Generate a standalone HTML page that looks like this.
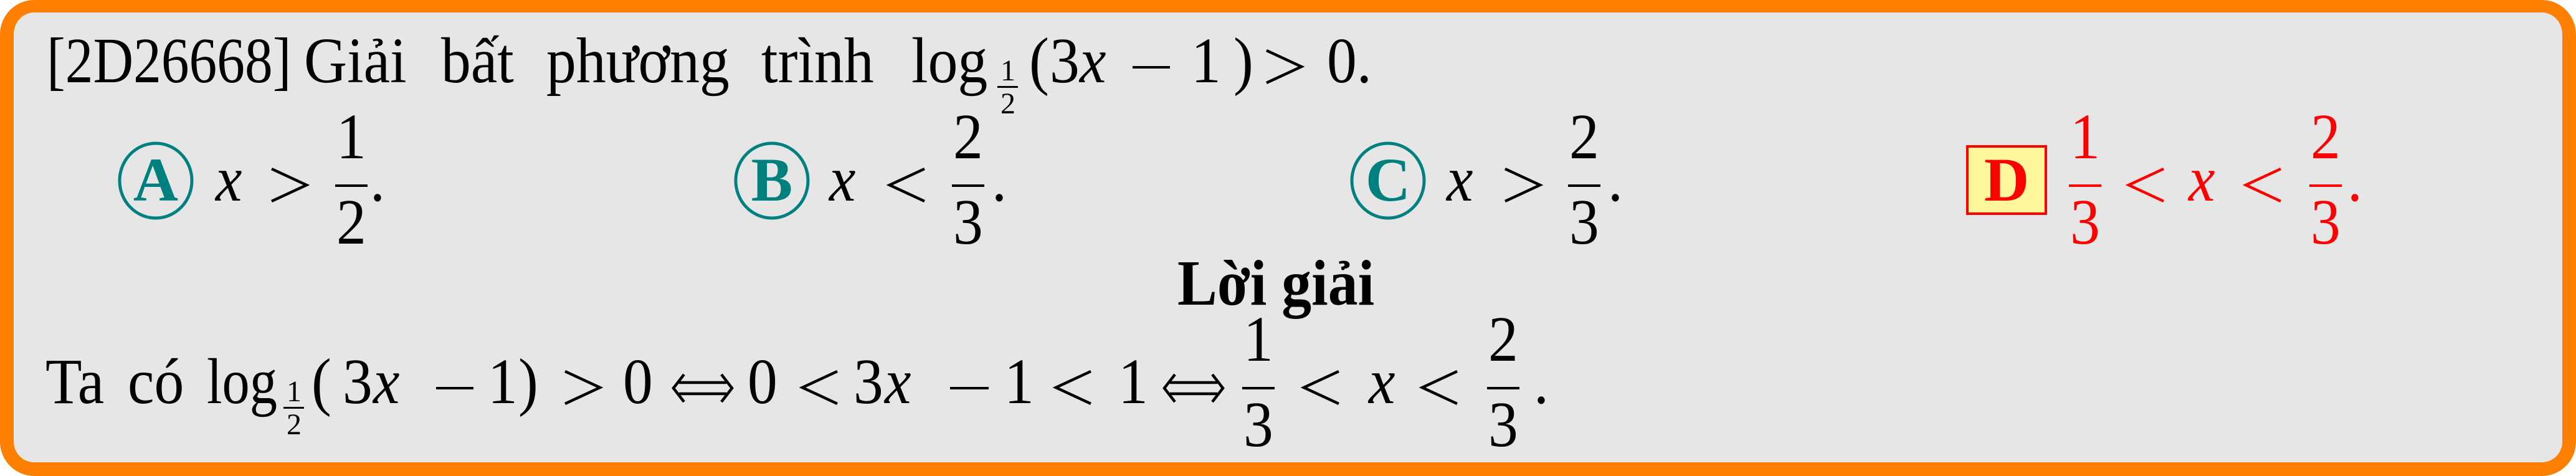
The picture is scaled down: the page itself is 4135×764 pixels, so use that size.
<!DOCTYPE html>
<html><head><meta charset="utf-8">
<style>
html,body{margin:0;padding:0;background:#fff;}
body{width:4135px;height:764px;position:relative;overflow:hidden;}
#box{position:absolute;left:0;top:0;width:4135px;height:764px;box-sizing:border-box;background:#e6e6e6;border:22px solid #ff8000;border-top-width:20px;border-radius:55px;}
.t{position:absolute;font-family:"Liberation Serif",serif;font-size:104px;line-height:104px;margin-top:-8px;white-space:pre;color:#000;transform:scaleX(0.92);transform-origin:0 0;}
.i{font-style:italic;}
.s{font-size:48px;line-height:48px;margin-top:0;transform:none;}
.b{font-weight:bold;}
.bar{position:absolute;height:4px;background:#000;}
.m{position:absolute;height:4px;background:#000;}
svg{position:absolute;overflow:visible;}
.rel polyline{fill:none;stroke:#000;stroke-width:4.5;stroke-linejoin:miter;}
.red{color:#f00;}
.rbg{background:#f00;}
.red.rel polyline{stroke:#f00;}
.circ{position:absolute;width:126px;height:126px;}
.cl{position:absolute;width:126px;text-align:center;font-family:"Liberation Serif",serif;font-size:100px;line-height:100px;font-weight:bold;color:#007f7f;}
</style></head><body>
<div id="box"></div>

<div class="t" style="left:75px;top:54px;transform:scaleX(0.86)">[2D26668]</div>
<div class="t" style="left:488px;top:54px">Giải</div>
<div class="t" style="left:708px;top:54px">bất</div>
<div class="t" style="left:877px;top:54px">phương</div>
<div class="t" style="left:1222px;top:54px">trình</div>
<div class="t" style="left:1463px;top:54px">log</div>
<div class="t s" style="left:1606px;top:90px">1</div>
<div class="bar" style="left:1601px;top:138px;width:33px;height:3px"></div>
<div class="t s" style="left:1606px;top:143px">2</div>
<div class="t" style="left:1652px;top:54px">(</div>
<div class="t" style="left:1685px;top:54px">3</div>
<div class="t i" style="left:1733px;top:54px">x</div>
<div class="m" style="left:1818px;top:106px;width:60px"></div>
<div class="t" style="left:1912px;top:54px">1</div>
<div class="t" style="left:1980px;top:54px">)</div>
<svg class="rel" style="left:2030px;top:78px" width="62" height="58"><polyline points="3,3 59,29 3,55"/></svg>
<div class="t" style="left:2130px;top:54px">0.</div>

<svg class="circ" style="left:187px;top:227px" width="126" height="126"><ellipse cx="63" cy="63" rx="58" ry="60" fill="none" stroke="#008080" stroke-width="5"/></svg>
<div class="cl" style="left:187px;top:239px">A</div>
<div class="t i" style="left:346px;top:244px">x</div>
<svg class="rel" style="left:433px;top:268px" width="62" height="58"><polyline points="3,3 59,29 3,55"/></svg>
<div class="t" style="left:540px;top:176px">1</div>
<div class="bar" style="left:538px;top:296px;width:52px"></div>
<div class="t" style="left:540px;top:313px">2</div>
<div class="t" style="left:594px;top:244px">.</div>

<svg class="circ" style="left:1176px;top:227px" width="126" height="126"><ellipse cx="63" cy="63" rx="58" ry="60" fill="none" stroke="#008080" stroke-width="5"/></svg>
<div class="cl" style="left:1176px;top:239px">B</div>
<div class="t i" style="left:1331px;top:244px">x</div>
<svg class="rel" style="left:1425px;top:268px" width="62" height="58"><polyline points="59,3 3,29 59,55"/></svg>
<div class="t" style="left:1530px;top:176px">2</div>
<div class="bar" style="left:1528px;top:296px;width:52px"></div>
<div class="t" style="left:1530px;top:313px">3</div>
<div class="t" style="left:1592px;top:244px">.</div>

<svg class="circ" style="left:2165px;top:227px" width="126" height="126"><ellipse cx="63" cy="63" rx="58" ry="60" fill="none" stroke="#008080" stroke-width="5"/></svg>
<div class="cl" style="left:2165px;top:239px">C</div>
<div class="t i" style="left:2322px;top:244px">x</div>
<svg class="rel" style="left:2413px;top:268px" width="62" height="58"><polyline points="3,3 59,29 3,55"/></svg>
<div class="t" style="left:2519px;top:176px">2</div>
<div class="bar" style="left:2517px;top:296px;width:52px"></div>
<div class="t" style="left:2519px;top:313px">3</div>
<div class="t" style="left:2581px;top:244px">.</div>

<div style="position:absolute;left:3156px;top:233px;width:130px;height:112px;box-sizing:border-box;border:4px solid #f00;background:#fff59a"></div>
<div class="cl" style="left:3158px;top:239px;color:#f00">D</div>
<div class="t red" style="left:3323px;top:176px">1</div>
<div class="bar rbg" style="left:3321px;top:296px;width:52px"></div>
<div class="t red" style="left:3323px;top:313px">3</div>
<svg class="rel red" style="left:3414px;top:268px" width="62" height="58"><polyline points="59,3 3,29 59,55"/></svg>
<div class="t i red" style="left:3513px;top:244px">x</div>
<svg class="rel red" style="left:3602px;top:268px" width="62" height="58"><polyline points="59,3 3,29 59,55"/></svg>
<div class="t red" style="left:3709px;top:176px">2</div>
<div class="bar rbg" style="left:3707px;top:296px;width:52px"></div>
<div class="t red" style="left:3709px;top:313px">3</div>
<div class="t red" style="left:3768px;top:244px">.</div>

<div class="t b" style="left:1890px;top:411px">Lời giải</div>

<div class="t" style="left:73px;top:569px">Ta</div>
<div class="t" style="left:205px;top:569px">có</div>
<div class="t" style="left:332px;top:569px;transform:scaleX(0.85)">log</div>
<div class="t s" style="left:460px;top:605px">1</div>
<div class="bar" style="left:455px;top:653px;width:33px;height:3px"></div>
<div class="t s" style="left:460px;top:658px">2</div>
<div class="t" style="left:500px;top:569px">(</div>
<div class="t" style="left:550px;top:569px">3</div>
<div class="t i" style="left:599px;top:569px">x</div>
<div class="m" style="left:700px;top:621px;width:60px"></div>
<div class="t" style="left:783px;top:569px">1</div>
<div class="t" style="left:832px;top:569px">)</div>
<svg class="rel" style="left:904px;top:593px" width="62" height="58"><polyline points="3,3 59,29 3,55"/></svg>
<div class="t" style="left:1000px;top:569px">0</div>
<svg class="rel" style="left:1078px;top:599px" width="100" height="48"><polyline points="20,2 3,24 20,46"/><polyline points="80,2 97,24 80,46"/><polyline points="12,15 88,15"/><polyline points="12,33 88,33"/></svg>
<div class="t" style="left:1200px;top:569px">0</div>
<svg class="rel" style="left:1285px;top:593px" width="62" height="58"><polyline points="59,3 3,29 59,55"/></svg>
<div class="t" style="left:1370px;top:569px">3</div>
<div class="t i" style="left:1420px;top:569px">x</div>
<div class="m" style="left:1525px;top:621px;width:62px"></div>
<div class="t" style="left:1612px;top:569px">1</div>
<svg class="rel" style="left:1692px;top:593px" width="62" height="58"><polyline points="59,3 3,29 59,55"/></svg>
<div class="t" style="left:1795px;top:569px">1</div>
<svg class="rel" style="left:1866px;top:599px" width="100" height="48"><polyline points="20,2 3,24 20,46"/><polyline points="80,2 97,24 80,46"/><polyline points="12,15 88,15"/><polyline points="12,33 88,33"/></svg>
<div class="t" style="left:1996px;top:501px">1</div>
<div class="bar" style="left:1994px;top:621px;width:52px"></div>
<div class="t" style="left:1996px;top:638px">3</div>
<svg class="rel" style="left:2090px;top:593px" width="62" height="58"><polyline points="59,3 3,29 59,55"/></svg>
<div class="t i" style="left:2197px;top:569px">x</div>
<svg class="rel" style="left:2280px;top:593px" width="62" height="58"><polyline points="59,3 3,29 59,55"/></svg>
<div class="t" style="left:2389px;top:501px">2</div>
<div class="bar" style="left:2387px;top:621px;width:52px"></div>
<div class="t" style="left:2389px;top:638px">3</div>
<div class="t" style="left:2462px;top:569px">.</div>
</body></html>
